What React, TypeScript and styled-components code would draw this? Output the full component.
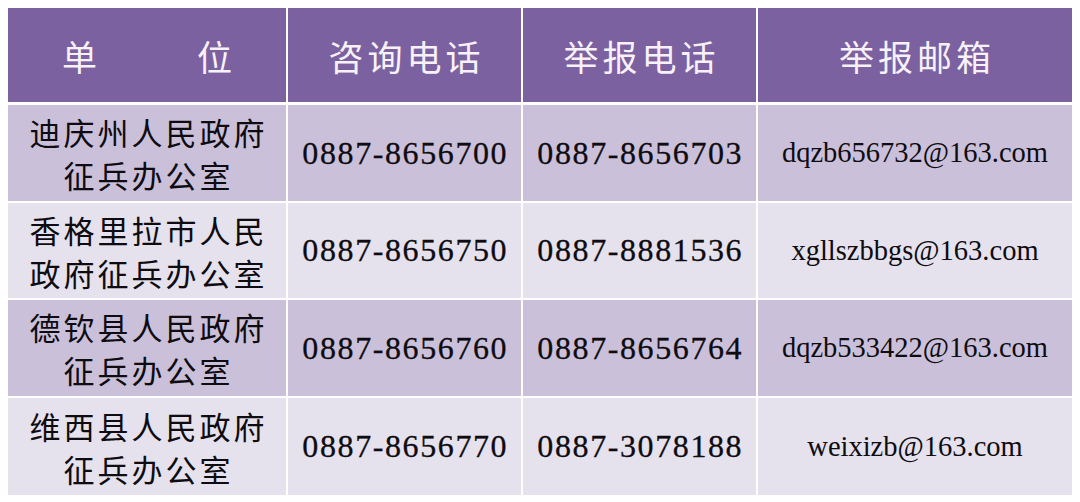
import React from "react";
import styled, { createGlobalStyle } from "styled-components";

const GlobalStyle = createGlobalStyle`
  html, body { margin: 0; padding: 0; background: #ffffff; }
  body { width: 1080px; height: 502px; overflow: hidden; }
`;

const Page = styled.div`
  padding: 8px 7px 0 8px;
`;

const Table = styled.div`
  display: grid;
  grid-template-columns: 278px 233px 233px 314px;
  grid-template-rows: 95px 96px 95px 96px 97px;
  column-gap: 2px;
  row-gap: 2px;
  background: #ffffff;
  width: 1065px;
`;

const HeadCell = styled.div`
  background: #7b619f;
  color: #f8f1f8;
  display: flex;
  align-items: center;
  justify-content: center;
  font-family: "Noto Sans CJK SC", sans-serif;
  font-size: 35px;
  letter-spacing: 4px;
  padding-left: 4px;
  margin-bottom: 1px;
`;

const HeadSplit = styled.div<{ $gap: number }>`
  display: flex;
  gap: ${(p) => p.$gap}px;
  letter-spacing: 0;
  margin-left: -4px;
`;

const Cell = styled.div<{ $alt: boolean }>`
  background: ${(p) => (p.$alt ? "#e5e1ed" : "#cbc0da")};
  color: #0e0c10;
  display: flex;
  flex-direction: column;
  align-items: center;
  justify-content: center;
  text-align: center;
`;

const UnitLine = styled.span`
  font-family: "Noto Sans CJK SC", sans-serif;
  font-size: 31px;
  letter-spacing: 3px;
  line-height: 43px;
  padding-left: 3px;
`;

const Phone = styled.span`
  font-family: "Liberation Serif", serif;
  font-size: 32px;
  letter-spacing: 1.6px;
  padding-left: 1.6px;
  -webkit-text-stroke: 0.3px #0e0c10;
`;

const Email = styled.span`
  font-family: "Liberation Serif", serif;
  font-size: 28.5px;
`;

const rows = [
  { unit: ["迪庆州人民政府", "征兵办公室"], consult: "0887-8656700", report: "0887-8656703", email: "dqzb656732@163.com" },
  { unit: ["香格里拉市人民", "政府征兵办公室"], consult: "0887-8656750", report: "0887-8881536", email: "xgllszbbgs@163.com" },
  { unit: ["德钦县人民政府", "征兵办公室"], consult: "0887-8656760", report: "0887-8656764", email: "dqzb533422@163.com" },
  { unit: ["维西县人民政府", "征兵办公室"], consult: "0887-8656770", report: "0887-3078188", email: "weixizb@163.com" },
];

export default function App() {
  return (
    <>
      <GlobalStyle />
      <Page>
        <Table>
          <HeadCell>
            <HeadSplit $gap={100}>
              <span>单</span>
              <span>位</span>
            </HeadSplit>
          </HeadCell>
          <HeadCell>咨询电话</HeadCell>
          <HeadCell>举报电话</HeadCell>
          <HeadCell>举报邮箱</HeadCell>
          {rows.map((r, i) => (
            <React.Fragment key={i}>
              <Cell $alt={i % 2 === 1}>
                {r.unit.map((l, j) => (
                  <UnitLine key={j}>{l}</UnitLine>
                ))}
              </Cell>
              <Cell $alt={i % 2 === 1}>
                <Phone>{r.consult}</Phone>
              </Cell>
              <Cell $alt={i % 2 === 1}>
                <Phone>{r.report}</Phone>
              </Cell>
              <Cell $alt={i % 2 === 1}>
                <Email>{r.email}</Email>
              </Cell>
            </React.Fragment>
          ))}
        </Table>
      </Page>
    </>
  );
}
